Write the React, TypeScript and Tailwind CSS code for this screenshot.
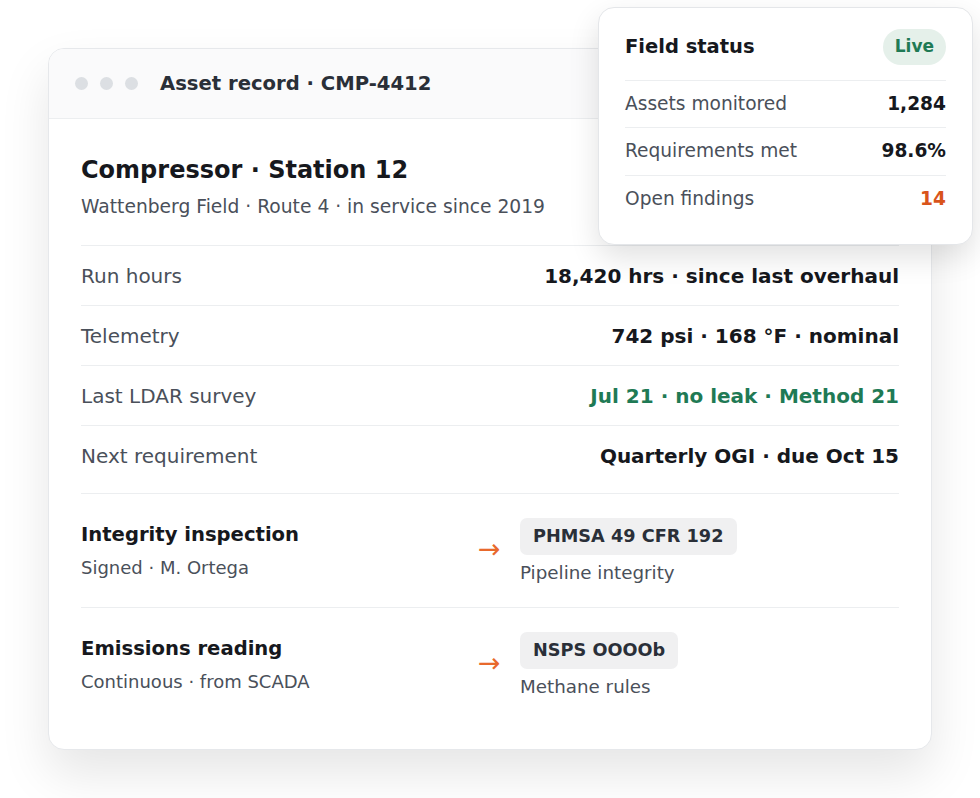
export default function App() {
  const rows = [
    ["Run hours", "18,420 hrs · since last overhaul", "text-[#16181d]"],
    ["Telemetry", "742 psi · 168 °F · nominal", "text-[#16181d]"],
    ["Last LDAR survey", "Jul 21 · no leak · Method 21", "text-[#1f7a55]"],
    ["Next requirement", "Quarterly OGI · due Oct 15", "text-[#16181d]"],
  ];
  const links = [
    ["Integrity inspection", "Signed · M. Ortega", "PHMSA 49 CFR 192", "Pipeline integrity"],
    ["Emissions reading", "Continuous · from SCADA", "NSPS OOOOb", "Methane rules"],
  ];
  return (
    <div className="relative w-[980px] h-[798px] bg-white overflow-hidden" style={{ fontFamily: '"DejaVu Sans", sans-serif' }}>
      <div className="absolute left-[48px] top-[48px] w-[884px] h-[702px] rounded-[16px] border border-[#e6e8eb] bg-white shadow-[0_24px_50px_rgba(0,0,0,0.10)] overflow-hidden">
        <div className="h-[70px] bg-[#fafafb] border-b border-[#eceef0] flex items-center pl-[26px] gap-[12px]">
          <span className="w-[13px] h-[13px] rounded-full bg-[#dcdfe3]" />
          <span className="w-[13px] h-[13px] rounded-full bg-[#dcdfe3]" />
          <span className="w-[13px] h-[13px] rounded-full bg-[#dcdfe3]" />
          <span className="ml-[10px] text-[19.6px] font-bold text-[#2a2f38]">Asset record · CMP-4412</span>
        </div>
        <div className="px-[32px] pt-[36px]">
          <div className="text-[24px] font-bold text-[#16181d] leading-[30px]">Compressor · Station 12</div>
          <div className="text-[18.7px] text-[#4a505a] mt-[10px] leading-[24px]">Wattenberg Field · Route 4 · in service since 2019</div>
          <div className="mt-[26px]">
            {rows.map(([l, v, c]) => (
              <div key={l} className="h-[60px] flex items-center justify-between border-t border-[#eceef0] text-[20px]">
                <span className="text-[#4a505a]">{l}</span>
                <span className={`font-bold ${c}`}>{v}</span>
              </div>
            ))}
          </div>
          <div className="mt-[8px] border-t border-[#eceef0]">
            {links.map(([a, b, chip, sub], i) => (
              <div key={a} className={`flex items-start pt-[24px] pb-[22px] ${i === 0 ? "border-b border-[#eceef0]" : ""}`}>
                <div className="w-[397px]">
                  <div className="text-[19.6px] font-bold text-[#16181d] leading-[26px] mt-[4px]">{a}</div>
                  <div className="text-[18px] text-[#4a505a] leading-[24px] mt-[8px]">{b}</div>
                </div>
                <span className="w-[42px] text-[27px] text-[#e8692c] leading-[30px] mt-[16px]">→</span>
                <div>
                  <div className="inline-block bg-[#f0f0f1] rounded-[7px] px-[13px] py-[6px] text-[17.7px] font-bold text-[#2a2f38] leading-[25px]">{chip}</div>
                  <div className="text-[18.3px] text-[#4a505a] leading-[24px] mt-[6px]">{sub}</div>
                </div>
              </div>
            ))}
          </div>
        </div>
      </div>
      <div className="absolute left-[598px] top-[7px] w-[375px] h-[238px] rounded-[16px] border border-[#e4e6e9] bg-white shadow-[0_12px_30px_rgba(0,0,0,0.12)] px-[26px] pt-[21px]">
        <div className="flex items-center justify-between pb-[15px] border-b border-[#eceef0]">
          <span className="text-[19.5px] font-bold text-[#16181d]">Field status</span>
          <span className="bg-[#e5f0ea] text-[#1f7a55] font-bold text-[17px] rounded-full px-[12px] py-[5px]">Live</span>
        </div>
        {[["Assets monitored", "1,284", "text-[#16181d]"], ["Requirements met", "98.6%", "text-[#16181d]"], ["Open findings", "14", "text-[#d9541b]"]].map(([l, v, c], i) => (
          <div key={l} className={`h-[47.5px] flex items-center justify-between text-[18.6px] ${i < 2 ? "border-b border-[#eceef0]" : ""}`}>
            <span className="text-[#4a505a]">{l}</span>
            <span className={`font-bold ${c}`}>{v}</span>
          </div>
        ))}
      </div>
    </div>
  );
}
